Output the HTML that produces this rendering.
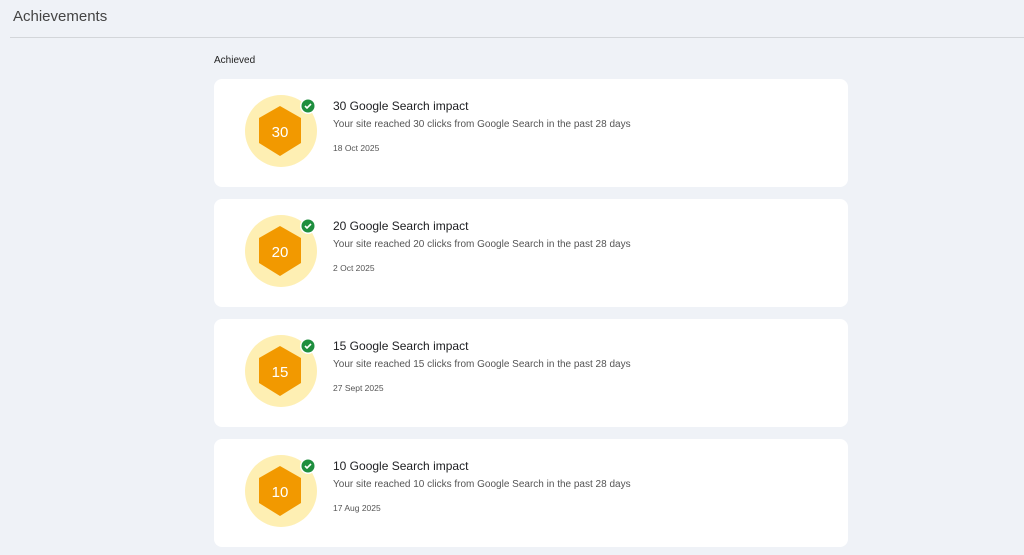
<!DOCTYPE html>
<html><head><style>
body{margin:0;width:1024px;height:555px;background:#eff2f7;font-family:"Liberation Sans",sans-serif;overflow:hidden;position:relative}
.h{position:absolute;left:13px;top:8px;font-size:15px;color:#444}
.line{position:absolute;left:10px;right:0;top:37px;height:1px;background:#d3d6da}
.ach{position:absolute;left:214px;top:55px;font-size:10px;color:#222}
.card{position:absolute;left:214px;width:634px;height:108px;background:#fff;border-radius:8px}
.card svg{position:absolute;left:30px;top:16px}
.t{position:absolute;left:119px;top:20px;font-size:12px;color:#202124}
.d{position:absolute;left:119px;top:40px;font-size:10px;color:#555}
.dt{position:absolute;left:119px;top:64px;font-size:8.5px;color:#555}
</style></head><body>
<div class="h">Achievements</div><div class="line"></div>
<div class="ach">Achieved</div>

<div class="card" style="top:79px"><svg width="80" height="80" viewBox="0 0 80 80"><circle cx="37" cy="36" r="36" fill="#feefb3"/><polygon points="36,11 57,23 57,48 36,61 15,48 15,23" fill="#f29900"/><text x="36" y="42" font-size="15" fill="#fff" text-anchor="middle" font-family="Liberation Sans">30</text><circle cx="64" cy="11" r="8" fill="#fff"/><circle cx="64" cy="11" r="6.5" fill="#1e8e3e"/><path d="M61 11l2 2 4-4" stroke="#fff" stroke-width="1.6" fill="none"/></svg>
<div class="t">30 Google Search impact</div><div class="d">Your site reached 30 clicks from Google Search in the past 28 days</div><div class="dt">18 Oct 2025</div></div>

<div class="card" style="top:199px"><svg width="80" height="80" viewBox="0 0 80 80"><circle cx="37" cy="36" r="36" fill="#feefb3"/><polygon points="36,11 57,23 57,48 36,61 15,48 15,23" fill="#f29900"/><text x="36" y="42" font-size="15" fill="#fff" text-anchor="middle" font-family="Liberation Sans">20</text><circle cx="64" cy="11" r="8" fill="#fff"/><circle cx="64" cy="11" r="6.5" fill="#1e8e3e"/><path d="M61 11l2 2 4-4" stroke="#fff" stroke-width="1.6" fill="none"/></svg>
<div class="t">20 Google Search impact</div><div class="d">Your site reached 20 clicks from Google Search in the past 28 days</div><div class="dt">2 Oct 2025</div></div>

<div class="card" style="top:319px"><svg width="80" height="80" viewBox="0 0 80 80"><circle cx="37" cy="36" r="36" fill="#feefb3"/><polygon points="36,11 57,23 57,48 36,61 15,48 15,23" fill="#f29900"/><text x="36" y="42" font-size="15" fill="#fff" text-anchor="middle" font-family="Liberation Sans">15</text><circle cx="64" cy="11" r="8" fill="#fff"/><circle cx="64" cy="11" r="6.5" fill="#1e8e3e"/><path d="M61 11l2 2 4-4" stroke="#fff" stroke-width="1.6" fill="none"/></svg>
<div class="t">15 Google Search impact</div><div class="d">Your site reached 15 clicks from Google Search in the past 28 days</div><div class="dt">27 Sept 2025</div></div>

<div class="card" style="top:439px"><svg width="80" height="80" viewBox="0 0 80 80"><circle cx="37" cy="36" r="36" fill="#feefb3"/><polygon points="36,11 57,23 57,48 36,61 15,48 15,23" fill="#f29900"/><text x="36" y="42" font-size="15" fill="#fff" text-anchor="middle" font-family="Liberation Sans">10</text><circle cx="64" cy="11" r="8" fill="#fff"/><circle cx="64" cy="11" r="6.5" fill="#1e8e3e"/><path d="M61 11l2 2 4-4" stroke="#fff" stroke-width="1.6" fill="none"/></svg>
<div class="t">10 Google Search impact</div><div class="d">Your site reached 10 clicks from Google Search in the past 28 days</div><div class="dt">17 Aug 2025</div></div>
</body></html>
